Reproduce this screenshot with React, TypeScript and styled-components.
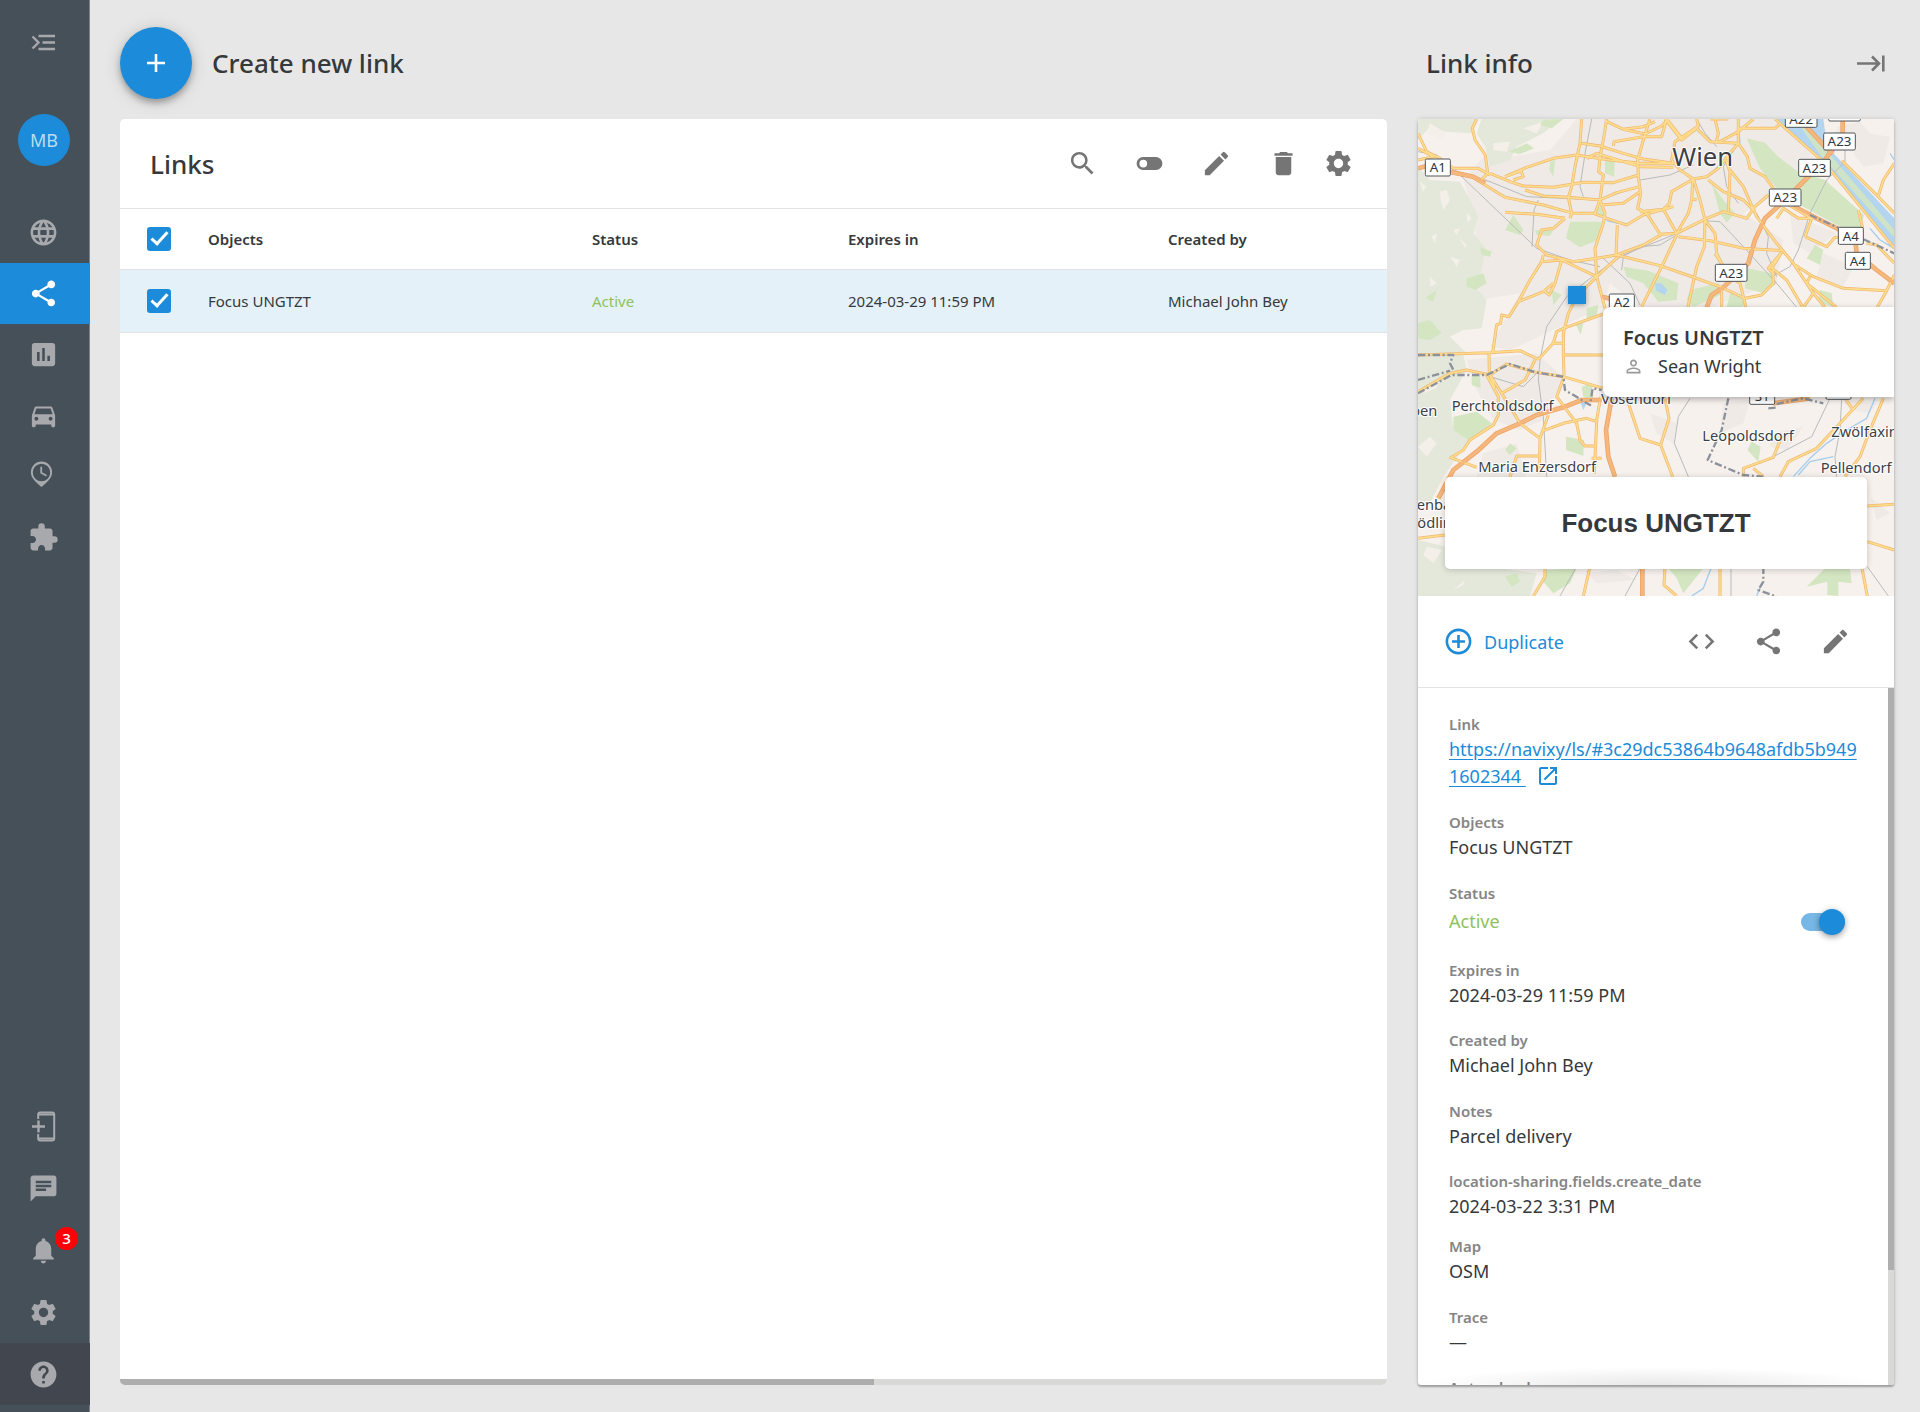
import React from "react";
import styled, { createGlobalStyle } from "styled-components";
import {
  MdAddCircleOutline,
  MdChat,
  MdCode,
  MdDelete,
  MdDirectionsCar,
  MdEdit,
  MdExtension,
  MdHelp,
  MdInsertChart,
  MdLanguage,
  MdNotifications,
  MdOpenInNew,
  MdPersonOutline,
  MdSearch,
  MdSettings,
  MdShare,
} from "react-icons/md";

const color = {
  page: "#e7e7e7",
  rail: "#465058",
  railDark: "#42474f",
  railIcon: "#a7a9ac",
  accent: "#1c8bd9",
  accentSoft: "#77b7e5",
  rowSelected: "#e4f1f9",
  text: "#35393c",
  label: "#858585",
  icon: "#757575",
  line: "#e3e3e3",
  green: "#8fc15d",
  track: "#d9dad8",
  thumb: "#aeaeae",
};

const GlobalStyle = createGlobalStyle`
  *, *::before, *::after { box-sizing: border-box; }
  body {
    margin: 0;
    background: ${color.page};
    color: ${color.text};
    font-family: "Noto Sans", "Open Sans", sans-serif;
    font-size: 18px;
  }
  button { font: inherit; }
`;

const Page = styled.div`
  display: flex;
  height: 100vh;
  min-height: 1000px;
`;

/* ---------- Sidebar ---------- */

const Sidebar = styled.nav`
  display: flex;
  flex-direction: column;
  flex: none;
  width: 90px;
  padding-bottom: 7px;
  background: ${color.rail};
  box-shadow: inset -1px 0 0 #7c8386;
`;

const RailButton = styled.button<{ $tall?: number; $active?: boolean; $dark?: boolean }>`
  position: relative;
  display: flex;
  align-items: center;
  justify-content: center;
  width: 100%;
  height: ${(p) => p.$tall ?? 61}px;
  padding: 0 3px 0 0;
  border: 0;
  cursor: pointer;
  color: ${(p) => (p.$active ? "#fff" : color.railIcon)};
  background: ${(p) => (p.$active ? color.accent : p.$dark ? color.railDark : "transparent")};
  svg { width: 31px; height: 31px; display: block; }
`;

const Avatar = styled.button`
  width: 52px;
  height: 52px;
  margin: 30px 0 36px 18px;
  padding: 0;
  border: 0;
  border-radius: 50%;
  background: ${color.accent};
  color: #badcf2;
  font-size: 18px;
`;

const RailGroup = styled.div<{ $bottom?: boolean }>`
  display: flex;
  flex-direction: column;
  margin-top: ${(p) => (p.$bottom ? "auto" : "0")};
`;

const Badge = styled.span`
  position: absolute;
  top: 8px;
  left: 55px;
  width: 23px;
  height: 23px;
  border-radius: 50%;
  background: #fb0207;
  color: #fff;
  font-size: 15px;
  font-weight: 500;
  line-height: 23px;
  text-align: center;
`;

/* ---------- Shared ---------- */

const Workspace = styled.div`
  display: flex;
  flex: 1;
  gap: 31px;
  min-width: 0;
  padding: 0 26px 27px 30px;
`;

const Column = styled.div<{ $width?: number }>`
  display: flex;
  flex-direction: column;
  flex: ${(p) => (p.$width ? `0 0 ${p.$width}px` : "1 1 0")};
  min-width: 0;
`;

const ColumnHeader = styled.header<{ $inset?: number }>`
  display: flex;
  align-items: center;
  flex: none;
  gap: 20px;
  height: 119px;
  padding: 27px ${(p) => p.$inset ?? 0}px 20px;
`;

const Title = styled.h1<{ $grow?: boolean }>`
  flex: ${(p) => (p.$grow ? "1" : "none")};
  margin: 0;
  font-size: 26px;
  font-weight: 500;
  line-height: 34px;
`;

const IconButton = styled.button`
  display: block;
  padding: 0;
  border: 0;
  background: none;
  color: ${color.icon};
  cursor: pointer;
  svg { display: block; width: 31px; height: 31px; }
`;

const IconRow = styled.div`
  display: flex;
  align-items: center;
  gap: 36px;
`;

/* ---------- Links list ---------- */

const Fab = styled.button`
  display: grid;
  place-items: center;
  width: 72px;
  height: 72px;
  padding: 0;
  border: 0;
  border-radius: 50%;
  background: ${color.accent};
  color: #fff;
  box-shadow: 0 4px 6px rgba(0, 0, 0, 0.28), 0 2px 18px rgba(0, 0, 0, 0.14);
  svg { display: block; width: 18px; height: 18px; }
`;

const Card = styled.section`
  display: flex;
  flex-direction: column;
  flex: 1;
  min-height: 0;
  overflow: hidden;
  border-radius: 5px;
  background: #fff;
`;

const CardToolbar = styled.div`
  display: flex;
  align-items: center;
  flex: none;
  gap: 24px;
  height: 90px;
  padding: 0 33px 0 30px;
  border-bottom: 1px solid ${color.line};
`;

const Table = styled.table`
  width: 100%;
  table-layout: fixed;
  border-collapse: collapse;
  font-size: 15px;
  th, td {
    padding: 0;
    text-align: left;
    border-bottom: 1px solid ${color.line};
  }
  th { height: 60px; font-weight: 600; }
  td { height: 63px; background: ${color.rowSelected}; }
`;

const Col = styled.col<{ $width?: number }>`
  width: ${(p) => (p.$width ? `${p.$width}px` : "auto")};
`;

const Checkbox = styled.input.attrs({ type: "checkbox" })`
  appearance: none;
  display: grid;
  justify-content: center;
  width: 24px;
  height: 24px;
  margin: 0 0 0 27px;
  border: 2px solid ${color.icon};
  border-radius: 3px;
  &:checked { border: 0; background: ${color.accent}; }
  &:checked::before {
    content: "";
    width: 9px;
    height: 17px;
    margin-top: 1px;
    border: solid #fff;
    border-width: 0 3px 3px 0;
    transform: rotate(42deg);
  }
`;

const ActiveText = styled.span`
  color: ${color.green};
`;

const TrackH = styled.div`
  flex: none;
  height: 6px;
  margin-top: auto;
  background: ${color.track};
  &::before {
    content: "";
    display: block;
    width: 59.5%;
    height: 100%;
    background: ${color.thumb};
  }
`;

/* ---------- Link info ---------- */

const InfoCard = styled(Card)`
  border-radius: 3px;
  box-shadow: 0 2px 2px rgba(0, 0, 0, 0.28), 0 0 5px rgba(0, 0, 0, 0.14);
`;

const MapBox = styled.div`
  position: relative;
  flex: none;
  height: 477px;
  overflow: hidden;
  > svg { display: block; width: 100%; height: 100%; }
`;

const Marker = styled.span`
  position: absolute;
  top: 167px;
  left: 150px;
  width: 18px;
  height: 18px;
  background: ${color.accent};
  box-shadow: 0 1px 5px rgba(0, 0, 0, 0.35);
`;

const Callout = styled.div`
  position: absolute;
  top: 188px;
  right: 0;
  left: 185px;
  height: 90px;
  padding: 17px 20px 0;
  border-radius: 8px 0 0 8px;
  background: #fff;
  box-shadow: 0 2px 6px rgba(0, 0, 0, 0.3);
`;

const CalloutTitle = styled.div`
  font-size: 20px;
  font-weight: 600;
  line-height: 28px;
`;

const CalloutPerson = styled.div`
  display: flex;
  align-items: center;
  gap: 14px;
  line-height: 28px;
  svg { width: 21px; height: 21px; color: #9a9a9a; }
`;

const MapLabel = styled.div`
  position: absolute;
  right: 27px;
  bottom: 27px;
  left: 27px;
  padding: 29px 0;
  border-radius: 5px;
  background: #fff;
  box-shadow: 0 1px 6px rgba(0, 0, 0, 0.2);
  font: bold 26px/34px "Liberation Sans", Arial, sans-serif;
  text-align: center;
`;

const InfoToolbar = styled.div`
  display: flex;
  align-items: center;
  justify-content: space-between;
  flex: none;
  height: 92px;
  padding: 0 43px 0 25px;
  border-bottom: 1px solid ${color.line};
`;

const TextButton = styled.button`
  display: flex;
  align-items: center;
  gap: 10px;
  padding: 0;
  border: 0;
  background: none;
  color: ${color.accent};
  cursor: pointer;
  svg { width: 31px; height: 31px; }
`;

const ScrollArea = styled.div`
  position: relative;
  display: flex;
  flex: 1;
  min-height: 0;
`;

const Details = styled.dl`
  flex: 1;
  min-width: 0;
  margin: 0;
  padding: 25px 27px 0 31px;
  overflow: hidden;
`;

const Field = styled.div<{ $gap?: number }>`
  margin-bottom: ${(p) => p.$gap ?? 21}px;
  dt {
    color: ${color.label};
    font-size: 15px;
    font-weight: 600;
    line-height: 23px;
  }
  dd {
    margin: 0;
    line-height: 27px;
    word-break: break-all;
  }
`;

const StatusRow = styled.dd`
  display: flex;
  align-items: center;
  justify-content: space-between;
  height: 33px;
  padding-right: 16px;
`;

const Switch = styled.input.attrs({ type: "checkbox", role: "switch" })`
  appearance: none;
  display: grid;
  align-content: center;
  justify-content: start;
  width: 44px;
  height: 18px;
  margin: 0;
  border-radius: 9px;
  background: #bbb;
  &::before {
    content: "";
    width: 26px;
    height: 26px;
    border-radius: 50%;
    background: #fff;
    box-shadow: 0 2px 6px rgba(0, 0, 0, 0.4);
  }
  &:checked { justify-content: end; background: ${color.accentSoft}; }
  &:checked::before { background: ${color.accent}; }
`;

const Link = styled.a`
  color: ${color.accent};
  text-decoration: underline;
  text-underline-offset: 3px;
`;

const OpenLink = styled.a`
  margin-left: 10px;
  color: ${color.accent};
  svg { width: 24px; height: 24px; vertical-align: -5px; }
`;

const TrackV = styled.div`
  flex: none;
  width: 6px;
  background: ${color.track};
  &::before {
    content: "";
    display: block;
    height: 83.5%;
    background: ${color.thumb};
  }
`;

const BottomFade = styled.div`
  position: absolute;
  right: 6px;
  bottom: 0;
  left: 0;
  height: 18px;
  pointer-events: none;
  background: radial-gradient(ellipse 50% 100% at 50% 100%, rgba(0, 0, 0, 0.09), rgba(0, 0, 0, 0));
`;

/* ---------- Drawn icons ---------- */

const ExpandMenuIcon = () => (
  <svg viewBox="0 0 31 31" fill="none" stroke="currentColor" strokeWidth="2.400">
    <path d="M10.500 9h16.500M14.500 15.500h12.500M10.500 22h16.500M4.500 9.500l6 6-6 6" />
  </svg>
);

const PlaceTimeIcon = () => (
  <svg viewBox="0 0 31 31">
    <path
      fill="currentColor"
      fillRule="evenodd"
      d="M13.500 .5A10.600 10.600 0 0 0 2.900 11.200c0 6 5 9.800 10.600 14.800 5.600-5 10.600-8.800 10.600-14.800A10.600 10.600 0 0 0 13.500.5zm0 2.300a8.700 8.700 0 1 1 0 17.400 8.700 8.700 0 0 1 0-17.400z"
    />
    <path d="M13.200 5.800v6l5.300 3" fill="none" stroke="currentColor" strokeWidth="1.800" />
  </svg>
);

const AddDeviceIcon = () => (
  <svg viewBox="0 0 31 31" fill="none" stroke="currentColor">
    <path strokeWidth="2" d="M10.200 8V3.500a2 2 0 0 1 2-2h12a2 2 0 0 1 2 2v24a2 2 0 0 1-2 2h-12a2 2 0 0 1-2-2v-4.500" />
    <path strokeWidth="2" d="M11 3.500h15M11 27.500h15" />
    <path strokeWidth="2.400" d="M4 15.500h13M10.500 9.500v12" />
  </svg>
);

const ToggleIcon = () => (
  <svg viewBox="0 0 24 24" fill="currentColor">
    <path fillRule="evenodd" d="M17 7H7a5 5 0 0 0 0 10h10a5 5 0 0 0 0-10zM7.200 15a3 3 0 1 1 0-6 3 3 0 0 1 0 6z" />
  </svg>
);

const PlusIcon = () => (
  <svg viewBox="0 0 18 18" stroke="currentColor" strokeWidth="2.600">
    <path d="M9 0v18M0 9h18" />
  </svg>
);

const HidePanelIcon = () => (
  <svg viewBox="0 0 31 31" fill="none" stroke="currentColor" strokeWidth="2.600">
    <path d="M2 15.500h21M17 8.500l7 7-7 7M28.300 7.500v16" />
  </svg>
);

/* ---------- Map ---------- */

const forests = [
  "M24 357H195L185 400 100 395 60 380 24 420Z",
  "M215 357H450L400 400 320 440 300 480 240 500 225 440 200 400Z",
  "M24 500 60 540 150 545 180 600 205 650 190 700 225 740 215 810 205 870 230 900 215 985 160 990 120 1010 170 1060 24 1062Z",
  "M24 1062 160 1065 170 1110 120 1200 130 1290 200 1300 150 1360 100 1430 60 1510 24 1500Z",
  "M24 1620 110 1640 105 1700 280 1706 380 1720 360 1788H24Z",
];

const clearings = [
  "M60 370 110 400 90 420 50 400Z",
  "M90 575 110 570 120 600 100 630 92 600Z",
  "M130 690 150 685 140 705Z",
  "M65 710 80 700 75 730Z",
  "M150 715 170 735 165 745Z",
  "M60 830 80 850 60 860Z",
  "M30 545 50 560 38 575Z",
  "M170 640 185 655 172 668Z",
  "M120 770 150 780 140 800Z",
  "M50 1640 95 1650 70 1690 40 1665Z",
  "M130 1770 165 1740 160 1755Z",
  "M60 1150 90 1135 80 1165 40 1180Z",
  "M24 1340 60 1310 80 1330 50 1370Z",
  "M250 430 300 425 290 455 250 450Z",
  "M340 385 400 365 380 400Z",
];

const suburbs = [
  "M220 470 300 470 420 450 500 357H1100L1240 500 1000 640 1120 720 1100 850 900 922 690 922 600 850 580 922 300 1050 240 1040 330 880 210 900 190 640 160 540Z",
  "M1280 380 1350 365 1380 400 1350 440 1290 430Z",
  "M1370 400 1440 410 1420 490 1360 500 1330 460Z",
  "M1140 640 1280 700 1200 760 1150 730Z",
  "M1240 760 1330 800 1300 860 1220 830Z",
  "M170 1080 380 1060 460 1130 400 1260 330 1290 250 1260 200 1170Z",
  "M940 1210 1020 1200 1000 1270 930 1300Z",
  "M1090 1300 1180 1280 1130 1350 1080 1340Z",
  "M720 1240 800 1270 790 1330 740 1300Z",
  "M220 1360 320 1330 350 1430 200 1430Z",
  "M1300 1200 1400 1210 1380 1240 1320 1230Z",
  "M1380 1490 1440 1540 1400 1560Z",
  "M530 1720 620 1710 680 1740 560 1750Z",
];

const parks = [
  "M1010 415 1065 428 1105 470 1160 512 1245 540 1362 645 1350 692 1290 680 1160 610 1100 565 1050 505Z",
  "M480 665 575 665 560 722 510 742 468 715Z",
  "M562 622 582 620 580 648 558 640Z",
  "M585 475 615 480 612 530 585 520Z",
  "M350 430 372 445 330 462 295 455Z",
  "M400 360 460 357 425 385 390 375Z",
  "M310 645 340 690 330 705 285 690Z",
  "M420 485 435 480 430 530 418 510Z",
  "M170 835 220 820 230 850 195 870 170 860Z",
  "M210 740 245 755 240 770 215 765Z",
  "M375 690 430 690 420 708 380 705Z",
  "M640 800 715 812 805 850 800 900 745 905 700 850 650 830Z",
  "M905 550 940 600 975 640 950 668 930 640Z",
  "M1010 805 1085 820 1100 850 1060 880 1005 865Z",
  "M840 870 925 850 940 880 900 900 850 920 830 900Z",
  "M960 880 1005 900 1000 922 950 922Z",
  "M1215 735 1240 750 1230 795 1190 775Z",
  "M1230 870 1265 880 1270 922 1225 905Z",
  "M1275 395 1305 400 1300 420 1270 415Z",
  "M530 925 565 915 560 950 530 958Z",
  "M425 870 455 885 430 915Z",
  "M498 975 520 970 512 1005Z",
  "M24 970 60 960 95 1000 60 1020 24 1015Z",
  "M45 895 80 870 70 905Z",
  "M130 1250 200 1235 245 1270 220 1300 175 1320 130 1290Z",
  "M468 1310 522 1320 520 1368 468 1350Z",
  "M515 1160 545 1150 550 1200 520 1190Z",
  "M300 1330 320 1345 300 1365 285 1350Z",
  "M1012 1350 1025 1325 1052 1340 1045 1385Z",
  "M775 1705H880L820 1780 800 1735Z",
  "M1245 1705 1320 1705 1325 1750 1285 1745 1285 1788 1252 1785 1252 1745 1190 1760Z",
  "M405 1710 500 1705 480 1750 430 1780 400 1745Z",
  "M285 1730 320 1720 330 1745 305 1760Z",
  "M185 1128 210 1125 212 1165 185 1155Z",
];

const waters = [
  "M1100 357H1240L1252 440 1453 655V740L1245 492Z",
  "M735 850 755 850 772 870 765 885 738 872Z",
  "M510 1205 535 1200 520 1230Z",
];

const streams = [
  "M910 515 940 480",
  "M590 662 625 670",
  "M1380 685 1410 720 1453 745",
  "M1440 460 1453 480",
  "M1395 1195 1370 1255 1310 1290 1250 1330 1200 1375 1150 1430",
  "M1270 1370 1200 1385 1165 1425",
  "M905 1700 880 1765 845 1788",
  "M1055 1750 1040 1788",
];

const railways = [
  "M150 525 380 745 480 780 570 800",
  "M24 455 80 465 130 510 240 545 350 590 460 595 570 600 680 560",
  "M385 600 372 630 366 740",
  "M545 357 527 450 510 560 520 590",
  "M390 1080 410 980 470 890 560 820 640 765 790 705 880 662 930 665 1000 740 1100 850 1160 922",
  "M580 775 660 850 690 915",
  "M800 705 750 735 690 740 640 770 635 810",
  "M1085 830 1140 800 1165 750 1200 640 1250 540 1305 485V430",
  "M985 430 940 500 950 560 985 610",
  "M860 357 885 400 920 440",
  "M1040 640 1075 710 1070 760 1100 830",
  "M985 357 990 430",
  "M690 540 780 525 850 495",
  "M390 1080 385 1140 400 1250 410 1430",
  "M835 1430 793 1330 805 1250 840 1195",
  "M1260 1195 1205 1310 1090 1370",
  "M1295 1195 1290 1290 1275 1370 1280 1430",
  "M500 1700 450 1788",
  "M690 1705 645 1788",
  "M963 1700V1788",
  "M1372 1700 1435 1788",
  "M240 1130 340 1160 380 1120",
];

const roads = [
  "M24 400 50 455 90 475 130 505 205 505 240 525",
  "M24 445 70 470 24 480",
  "M200 357 187 385 195 420 226 465 233 520 215 538",
  "M120 518 185 530 285 592 400 615 490 640 550 640 610 662 650 675 700 645 790 620",
  "M285 530 350 502 430 475 500 465 545 472 600 480 690 490 790 490",
  "M285 530 333 513 340 530 310 540",
  "M240 520 300 545 340 558 430 562 520 547 610 548 685 525",
  "M345 570 400 588 475 592 570 600 620 578 690 560",
  "M515 357 510 430 495 500 485 560 475 592 485 640 480 655",
  "M590 357 580 420 570 470 566 515 580 525 570 600 585 640 580 670 555 745 560 830 585 925",
  "M515 430 570 438 640 460 700 477 790 490",
  "M570 600 555 640",
  "M720 357 700 420 683 480 685 530 692 580 683 625 710 640 750 702",
  "M585 362 640 388 705 402 755 378 775 357",
  "M610 438 612 425 700 410 755 410 770 357 820 420",
  "M735 365 700 380 640 388",
  "M530 475 560 460 690 500 790 502",
  "M570 615 640 610 690 575",
  "M765 357 815 420 860 385 900 425 985 430 1012 470 1020 505 1065 530 1100 580 1120 600",
  "M860 357 865 378 795 425 785 480 810 510 850 537 890 530 925 505 955 465 985 430V357",
  "M915 357 925 400 918 430",
  "M955 357 900 357",
  "M1030 357 985 395 930 425",
  "M985 385H1095L1110 372",
  "M850 537 785 575 778 610 760 628 690 635",
  "M848 537 845 600 835 640 800 700 750 703",
  "M760 628 800 700",
  "M850 537 870 600 885 660 883 740 860 800 833 925",
  "M845 595 860 600",
  "M285 637 380 643 465 655",
  "M465 655 430 685 395 690 380 735 410 765 490 785 560 775 620 765 700 735 755 703 800 700 890 655 940 635 1010 655 1035 620 1075 585",
  "M622 675 618 765",
  "M400 765 395 785 455 780 560 830",
  "M395 785 360 840 325 905 297 950 275 945 272 970 260 975 248 1058",
  "M455 780 435 850 418 885 400 870",
  "M325 905 400 875 430 850",
  "M625 770 560 830 520 870 490 910 475 940 460 1000V1065L462 1125",
  "M620 765 750 797 840 828 935 862 1005 895 1055 885 1090 850 1088 800 1115 757",
  "M800 705 760 790 695 920",
  "M805 710 900 722 1000 745 1115 752",
  "M885 660 915 700 920 760 950 820",
  "M915 760 960 830 990 850 1008 922",
  "M935 862V922",
  "M948 480 960 515 955 635",
  "M895 540 940 575 1000 600 1030 630",
  "M960 510 1000 560 1040 650 1100 730 1150 790 1210 880 1245 922",
  "M1155 795 1210 830 1300 865 1430 872 1453 825",
  "M1430 872 1402 922",
  "M1200 830 1190 850 1280 922",
  "M1210 880 1180 922",
  "M1080 800 1130 840 1160 890 1178 922",
  "M1115 757 1075 805 1090 820",
  "M1185 710 1250 740 1275 712 1310 715",
  "M1185 710 1205 655 1120 605",
  "M1345 630 1358 685",
  "M1095 357 1245 490 1453 745",
  "M1295 482 1405 590 1453 640",
  "M1453 490 1420 540 1405 588",
  "M1100 655 1120 625 1165 655 1210 655",
  "M1370 730 1400 735 1453 790",
  "M24 1065 240 1058 330 1052 385 1078",
  "M385 1078 430 1030 440 995 460 985 580 942",
  "M425 1030H460M460 1065H580",
  "M237 1058 238 1120 255 1165",
  "M275 1180 345 1140 375 1080",
  "M24 1175 120 1120 170 1110 240 1125 290 1092 370 1115 460 1130 580 1165",
  "M230 1125 265 1190 265 1245 250 1275 180 1320 160 1350 122 1373 200 1402",
  "M240 1125 275 1180 330 1270 390 1315 388 1420",
  "M390 1315 415 1245",
  "M400 1292 460 1270 530 1255 560 1265",
  "M462 1130 440 1190 500 1270 510 1320 525 1338H555",
  "M572 1190 560 1260 553 1420",
  "M545 1375H575",
  "M300 1430 320 1368H388",
  "M650 1195 690 1315 752 1335 788 1430",
  "M752 1335 777 1255 765 1195",
  "M1000 1430V1405L1090 1372 1115 1310",
  "M1030 1405 1060 1430",
  "M1110 1430 1135 1385 1220 1345 1290 1270 1360 1195",
  "M1305 1195 1330 1230",
  "M1420 1195 1380 1290 1350 1370 1305 1430",
  "M24 1615 105 1605",
  "M405 1700V1730L370 1788",
  "M540 1700 520 1788",
  "M765 1700 762 1755 800 1788",
  "M930 1700V1788",
  "M1355 1700 1372 1788",
  "M1372 1518 1453 1513",
  "M1372 1625 1453 1650",
];

const motorways = [
  "M24 505 60 495 120 515 190 530 225 550",
  "M85 1495 130 1410 200 1355 260 1300 330 1270 380 1245 460 1222 515 1200H575",
  "M605 1195 588 1290 595 1370 615 1430",
  "M697 1700V1788",
  "M890 922 905 885 940 862 1015 790 1035 720 1065 655 1120 605 1170 555 1245 480 1298 400V357",
  "M1150 618 1210 650 1290 690 1335 715 1340 760 1400 810 1453 850",
  "M1185 375 1245 440 1270 460",
  "M575 890 640 905",
  "M1090 1210 1200 1195",
];

const borders = [
  "M24 1065H130L120 1090 130 1110",
  "M24 1140 120 1112M24 1180 125 1125 230 1125 300 1092 380 1118 460 1130 465 1170 540 1215 548 1165 575 1170",
  "M955 1195 935 1290 893 1380 1000 1425 1060 1430",
  "M1075 1225 1105 1222M1100 1212 1180 1195 1240 1210",
  "M1060 1700V1745L1045 1770 1100 1790",
  "M1200 645 1300 690 1453 760",
];

const shields: [string, number, number, number][] = [
  ["A1", 46, 477, 75],
  ["A22", 1126, 331, 95],
  ["A23", 1256, 312, 95],
  ["A23", 1241, 399, 95],
  ["A23", 1166, 478, 95],
  ["A23", 1078, 567, 95],
  ["A4", 1285, 682, 75],
  ["A4", 1306, 757, 75],
  ["A23", 916, 793, 95],
  ["A2", 598, 882, 75],
  ["S1", 1019, 1162, 75],
  ["S1", 1248, 1147, 75],
];

const places: [string, number, number, number, "start" | "end"][] = [
  ["Wien", 787, 497, 77, "start"],
  ["Perchtoldsdorf", 125, 1232, 44, "start"],
  ["ben", 82, 1249, 44, "end"],
  ["Maria Enzersdorf", 205, 1416, 44, "start"],
  ["Vösendorf", 573, 1212, 44, "start"],
  ["Leopoldsdorf", 877, 1323, 44, "start"],
  ["Zwölfaxing", 1264, 1312, 44, "start"],
  ["Pellendorf", 1232, 1419, 44, "start"],
  ["enba", 20, 1529, 44, "start"],
  ["ödlin", 22, 1585, 44, "start"],
];

const Shapes = ({ paths, ...rest }: { paths: string[] } & React.SVGProps<SVGPathElement>) => (
  <path d={paths.join("")} {...rest} />
);

const CityMap = () => (
  <svg viewBox="24 357 1428 1431" preserveAspectRatio="xMidYMid slice" role="img" aria-label="Map of Wien">
    <rect x="24" y="357" width="1430" height="1431" fill="#f7f1ed" />
    <Shapes paths={suburbs} fill="#efeae6" />
    <Shapes paths={forests} fill="#e4e8da" />
    <Shapes paths={clearings} fill="#f5efea" />
    <Shapes paths={parks} fill="#d3e6c1" />
    <Shapes paths={waters} fill="#b4d5ef" />
    <path d="M1155 357 1180 370 1453 690V712L1300 540 1235 470Z" fill="#cfe3c6" />
    <g fill="none" strokeLinejoin="round">
      <Shapes paths={streams} stroke="#a3cdee" strokeWidth="4" />
      <Shapes paths={railways} stroke="#b7bbbb" strokeWidth="3" />
      <Shapes paths={roads} stroke="#f0b670" strokeWidth="9" />
      <Shapes paths={motorways} stroke="#eda568" strokeWidth="14" />
      <Shapes paths={roads} stroke="#fddc8c" strokeWidth="5" />
      <Shapes paths={motorways} stroke="#f6b77c" strokeWidth="9" />
      <Shapes paths={borders} stroke="#8c929c" strokeWidth="7" strokeDasharray="22 8 6 8" />
    </g>
    <g
      fontFamily="'Noto Sans', sans-serif"
      fill="#3b4045"
      stroke="#fff"
      strokeWidth="6"
      strokeLinejoin="round"
      paintOrder="stroke"
    >
      {places.map(([name, x, y, size, anchor]) => (
        <text key={name} x={x} y={y} fontSize={size} textAnchor={anchor}>
          {name}
        </text>
      ))}
    </g>
    <g fontFamily="'Noto Sans', sans-serif" fontSize="40" textAnchor="middle">
      {shields.map(([name, x, y, width]) => (
        <g key={`${name}-${x}`}>
          <rect x={x} y={y} width={width} height="51" rx="4" fill="#fff" stroke="#50565c" strokeWidth="3" />
          <text x={x + width / 2} y={y + 40} fill="#33383d">
            {name}
          </text>
        </g>
      ))}
    </g>
  </svg>
);

/* ---------- Page ---------- */

const TextField = ({ label, value, gap }: { label: string; value: string; gap?: number }) => (
  <Field $gap={gap}>
    <dt>{label}</dt>
    <dd>{value}</dd>
  </Field>
);

const url = "https://navixy/ls/#3c29dc53864b9648afdb5b9491602344";

export default function App() {
  return (
    <Page>
      <GlobalStyle />
      <Sidebar aria-label="Main">
        <RailButton $tall={84} aria-label="Expand menu"><ExpandMenuIcon /></RailButton>
        <Avatar>MB</Avatar>
        <RailGroup>
          <RailButton aria-label="Map"><MdLanguage /></RailButton>
          <RailButton $active aria-label="Location sharing"><MdShare /></RailButton>
          <RailButton aria-label="Reports"><MdInsertChart /></RailButton>
          <RailButton aria-label="Fleet"><MdDirectionsCar /></RailButton>
          <RailButton aria-label="Places"><PlaceTimeIcon /></RailButton>
          <RailButton aria-label="Plugins"><MdExtension /></RailButton>
        </RailGroup>
        <RailGroup $bottom>
          <RailButton $tall={62} aria-label="Add device"><AddDeviceIcon /></RailButton>
          <RailButton $tall={62} aria-label="Chat"><MdChat /></RailButton>
          <RailButton $tall={62} aria-label="Notifications">
            <MdNotifications />
            <Badge>3</Badge>
          </RailButton>
          <RailButton $tall={62} aria-label="Settings"><MdSettings /></RailButton>
          <RailButton $tall={62} $dark aria-label="Help"><MdHelp /></RailButton>
        </RailGroup>
      </Sidebar>

      <Workspace>
        <Column as="main">
          <ColumnHeader>
            <Fab aria-label="Create new link"><PlusIcon /></Fab>
            <Title>Create new link</Title>
          </ColumnHeader>
          <Card>
            <CardToolbar>
              <Title as="h2" $grow>Links</Title>
              <IconRow>
                <IconButton aria-label="Search"><MdSearch /></IconButton>
                <IconButton aria-label="Toggle status"><ToggleIcon /></IconButton>
                <IconButton aria-label="Edit"><MdEdit /></IconButton>
                <IconButton aria-label="Delete"><MdDelete /></IconButton>
              </IconRow>
              <IconButton aria-label="Table settings"><MdSettings /></IconButton>
            </CardToolbar>
            <Table>
              <colgroup>
                <Col $width={88} />
                <Col $width={384} />
                <Col $width={256} />
                <Col $width={320} />
                <Col />
              </colgroup>
              <thead>
                <tr>
                  <th><Checkbox defaultChecked aria-label="Select all" /></th>
                  <th>Objects</th>
                  <th>Status</th>
                  <th>Expires in</th>
                  <th>Created by</th>
                </tr>
              </thead>
              <tbody>
                <tr>
                  <td><Checkbox defaultChecked aria-label="Select Focus UNGTZT" /></td>
                  <td>Focus UNGTZT</td>
                  <td><ActiveText>Active</ActiveText></td>
                  <td>2024-03-29 11:59 PM</td>
                  <td>Michael John Bey</td>
                </tr>
              </tbody>
            </Table>
            <TrackH />
          </Card>
        </Column>

        <Column as="aside" $width={476}>
          <ColumnHeader $inset={8}>
            <Title as="h2" $grow>Link info</Title>
            <IconButton aria-label="Hide panel"><HidePanelIcon /></IconButton>
          </ColumnHeader>
          <InfoCard>
            <MapBox>
              <CityMap />
              <Marker />
              <Callout>
                <CalloutTitle>Focus UNGTZT</CalloutTitle>
                <CalloutPerson><MdPersonOutline />Sean Wright</CalloutPerson>
              </Callout>
              <MapLabel>Focus UNGTZT</MapLabel>
            </MapBox>
            <InfoToolbar>
              <TextButton><MdAddCircleOutline />Duplicate</TextButton>
              <IconRow>
                <IconButton aria-label="Embed code"><MdCode /></IconButton>
                <IconButton aria-label="Share"><MdShare /></IconButton>
                <IconButton aria-label="Edit link"><MdEdit /></IconButton>
              </IconRow>
            </InfoToolbar>
            <ScrollArea>
              <Details>
                <Field>
                  <dt>Link</dt>
                  <dd>
                    <Link href={url}>{url}&nbsp;</Link>
                    <OpenLink href={url} aria-label="Open in new tab"><MdOpenInNew /></OpenLink>
                  </dd>
                </Field>
                <TextField label="Objects" value="Focus UNGTZT" />
                <Field>
                  <dt><label htmlFor="status-switch">Status</label></dt>
                  <StatusRow>
                    <ActiveText>Active</ActiveText>
                    <Switch id="status-switch" defaultChecked />
                  </StatusRow>
                </Field>
                <TextField label="Expires in" value="2024-03-29 11:59 PM" gap={20} />
                <TextField label="Created by" value="Michael John Bey" />
                <TextField label="Notes" value="Parcel delivery" gap={20} />
                <TextField label="location-sharing.fields.create_date" value="2024-03-22 3:31 PM" gap={15} />
                <TextField label="Map" value="OSM" />
                <TextField label="Trace" value="—" gap={20} />
                <TextField label="Autoreload" value="—" />
              </Details>
              <TrackV />
              <BottomFade />
            </ScrollArea>
          </InfoCard>
        </Column>
      </Workspace>
    </Page>
  );
}
